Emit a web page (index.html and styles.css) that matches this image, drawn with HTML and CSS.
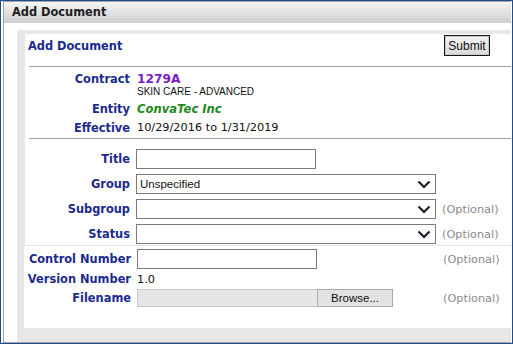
FILE: index.html
```html
<!DOCTYPE html>
<html lang="en">
<head>
  <meta charset="UTF-8" />
  <title>Add Document</title>
  <link rel="stylesheet" href="styles.css">
</head>
<body>
  <div class="window">
    <div class="panel">
      <div class="panel-head">Add Document</div>
      <div class="panel-body">
        <div class="well">
          <div class="sheet">
            <div class="sheet-top">
              <div class="sheet-title">Add Document</div>
              <button class="submit">Submit</button>
            </div>

            <div class="info">
              <div class="label">Contract</div>
              <div class="contract">1279A</div>
              <div></div>
              <div class="plan">SKIN CARE - ADVANCED</div>
              <div class="label gap-entity">Entity</div>
              <div class="entity gap-entity">ConvaTec Inc</div>
              <div class="label gap-effective">Effective</div>
              <div class="value gap-effective">10/29/2016 to 1/31/2019</div>
            </div>

            <div class="fields">
              <div class="label">Title</div>
              <div class="field"><input type="text" class="text-in" /></div>
              <div></div>

              <div class="label">Group</div>
              <div class="field">
                <div class="select">Unspecified
                  <svg width="14" height="9" viewBox="0 0 14 9"><path d="M1.5 1.5 L7 7 L12.5 1.5" fill="none" stroke="#1b1b2a" stroke-width="2.2"/></svg>
                </div>
              </div>
              <div></div>

              <div class="label">Subgroup</div>
              <div class="field">
                <div class="select">
                  <svg width="14" height="9" viewBox="0 0 14 9"><path d="M1.5 1.5 L7 7 L12.5 1.5" fill="none" stroke="#1b1b2a" stroke-width="2.2"/></svg>
                </div>
              </div>
              <div class="optional">(Optional)</div>

              <div class="label">Status</div>
              <div class="field">
                <div class="select">
                  <svg width="14" height="9" viewBox="0 0 14 9"><path d="M1.5 1.5 L7 7 L12.5 1.5" fill="none" stroke="#1b1b2a" stroke-width="2.2"/></svg>
                </div>
              </div>
              <div class="optional">(Optional)</div>
            </div>
          </div>

          <div class="sheet sheet-extra">
            <div class="fields fields-extra">
              <div class="label">Control Number</div>
              <div class="field"><input type="text" class="text-in" /></div>
              <div class="optional">(Optional)</div>

              <div class="label">Version Number</div>
              <div class="value">1.0</div>
              <div></div>

              <div class="label">Filename</div>
              <div class="field">
                <div class="file"><span class="file-box"></span><span class="browse">Browse...</span></div>
              </div>
              <div class="optional">(Optional)</div>
            </div>
          </div>
        </div>
      </div>
    </div>
  </div>
</body>
</html>
```

FILE: styles.css
```css
body {
  margin: 0;
  font-family: 'DejaVu Sans', Verdana, sans-serif;
  font-size: 11.3px;
  background: #ffffff;
}
.window {
  width: 513px;
  height: 344px;
  box-sizing: border-box;
  border: 1px solid #1d4c8a;
  padding: 0 1px 0 2px;
  background: #ffffff;
}
.panel {
  height: 342px;
  box-sizing: border-box;
  border: 1px solid #a3a3a3;
  border-right: none;
  display: flex;
  flex-direction: column;
}
.panel-head {
  height: 21px;
  line-height: 21px;
  padding-left: 8px;
  background: linear-gradient(to bottom, #f5f5f5, #cfcdd0);
  color: #1e1e1e;
  font-weight: bold;
  font-size: 11.4px;
}
.panel-body {
  flex: 1;
  padding: 7px 0 0 13px;
  background: #ffffff;
  display: flex;
}
.well {
  flex: 1;
  background: #e7e7e7;
  padding: 4px 0 14px 7px;
  display: flex;
  flex-direction: column;
}
.sheet {
  background: #ffffff;
  margin-left: 1px;
}
.sheet-top {
  height: 32px;
  display: flex;
  justify-content: space-between;
  align-items: flex-start;
  border-bottom: 1px solid #a0a0a0;
  margin-left: 4px;
}
.sheet-title {
  color: #1b2a8e;
  font-weight: bold;
  font-size: 11.4px;
  margin: 5px 0 0 -1px;
}
.submit {
  margin: 1px 21px 0 0;
  height: 21px;
  width: 46px;
  padding: 0;
  border: 1px solid #151515;
  box-shadow: inset 0 0 0 1px #c8c8c8;
  background: linear-gradient(to bottom, #f3f3f3, #dadada);
  font-family: 'Liberation Sans', Arial, sans-serif;
  font-size: 12px;
  color: #111;
}
.label {
  color: #1b2a8e;
  font-weight: bold;
  font-size: 11.4px;
  text-align: right;
  white-space: nowrap;
}
.info {
  display: grid;
  grid-template-columns: 101px 1fr;
  column-gap: 7px;
  grid-template-rows: 13px 13px auto auto;
  align-items: center;
  margin-left: 4px;
  padding: 5px 0 3px;
  border-bottom: 1px solid #a0a0a0;
}
.contract {
  color: #7a1cc8;
  font-weight: bold;
  font-size: 12.2px;
}
.plan {
  font-family: 'Liberation Sans', Arial, sans-serif;
  font-size: 10px;
  color: #111;
}
.entity {
  color: #1c8a1c;
  font-weight: bold;
  font-style: italic;
  font-size: 11.6px;
}
.gap-entity {
  margin-top: 4px;
  line-height: 14px;
}
.gap-effective {
  margin-top: 5px;
  line-height: 14px;
}
.value {
  color: #111;
}
.fields {
  display: grid;
  grid-template-columns: 101px 300px auto;
  column-gap: 6px;
  row-gap: 5px;
  grid-auto-rows: 20px;
  align-items: center;
  margin-left: 4px;
  padding: 10px 0 1px;
}
.text-in {
  width: 180px;
  height: 20px;
  box-sizing: border-box;
  border: 1px solid #7a7a7a;
  margin: 0;
  padding: 0;
  display: block;
}
.select {
  height: 20px;
  box-sizing: border-box;
  border: 1px solid #7a7a7a;
  display: flex;
  align-items: center;
  justify-content: space-between;
  padding: 0 4px 0 3px;
  font-family: 'Liberation Sans', Arial, sans-serif;
  font-size: 11.5px;
  color: #111;
}
.select svg {
  margin-left: auto;
}
.optional {
  color: #8a8a8a;
}
.sheet-extra {
  margin-left: 0;
  flex: 1;
  border-top: 1px solid #e4e4e4;
}
.fields-extra {
  grid-template-columns: 106px 300px auto;
  grid-template-rows: 20px 16px 18px;
  row-gap: 2px;
  padding: 3px 0 0;
  margin-left: 1px;
}
.file {
  display: flex;
  height: 18px;
}
.file-box {
  width: 180px;
  box-sizing: border-box;
  background: #e6e6e6;
  border: 1px solid #c6c6c6;
  border-right: none;
}
.browse {
  width: 76px;
  box-sizing: border-box;
  border: 1px solid #aaaaaa;
  background: #e2e2e2;
  font-family: 'Liberation Sans', Arial, sans-serif;
  font-size: 11.5px;
  text-align: center;
  line-height: 16px;
  color: #111;
}
```
